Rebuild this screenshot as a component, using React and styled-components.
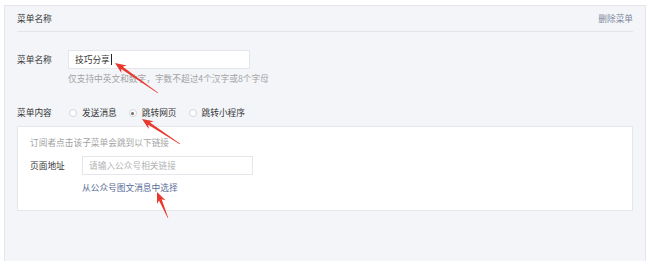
import React from "react";
import styled, { createGlobalStyle } from "styled-components";

const Global = createGlobalStyle`
  html, body { margin: 0; padding: 0; background: #ffffff; overflow: hidden; }
  body { font-family: "Noto Sans CJK SC", "Noto Sans", sans-serif; }
  * { box-sizing: border-box; }
`;

const Page = styled.div`
  position: relative;
  width: 650px;
  height: 261px;
  padding: 5px 4px 0 4px;
`;

const Panel = styled.div`
  height: 256px;
  background: #f4f5f9;
  border: 1px solid #e5e6eb;
  border-bottom: none;
  padding: 0 12px;
  font-size: 8.7px;
  line-height: 14px;
  color: #353535;
`;

const Header = styled.div`
  height: 26px;
  display: flex;
  align-items: center;
  justify-content: space-between;
  border-bottom: 1px solid #e2e4ea;
`;

const DeleteLink = styled.span`
  color: #7b869c;
`;

const Row = styled.div`
  display: flex;
  align-items: center;
  margin-top: ${(p) => p.$mt || 0}px;
`;

const Label = styled.div`
  width: ${(p) => p.$w}px;
  flex: none;
`;

const Input = styled.div`
  width: ${(p) => p.$w}px;
  height: 19px;
  background: #fff;
  border: 1px solid #e4e6eb;
  padding-left: 6px;
  display: flex;
  align-items: center;
  color: ${(p) => (p.$placeholder ? "#b3b3b3" : "#353535")};
`;

const Caret = styled.span`
  display: inline-block;
  width: 1px;
  height: 11px;
  background: #222;
  margin-left: 1px;
`;

const Hint = styled.div`
  margin-top: ${(p) => p.$mt || 0}px;
  margin-left: ${(p) => p.$ml || 0}px;
  color: #a3a3a3;
`;

const RadioGroup = styled.div`
  display: flex;
  align-items: center;
  gap: 12px;
`;

const RadioItem = styled.label`
  display: flex;
  align-items: center;
  gap: 5px;
`;

const RadioCircle = styled.span`
  width: 8px;
  height: 8px;
  border-radius: 50%;
  border: 1px solid #d2d4d9;
  background: #fff;
  display: flex;
  align-items: center;
  justify-content: center;
  &::after {
    content: "";
    width: 3px;
    height: 3px;
    border-radius: 50%;
    background: ${(p) => (p.$checked ? "#6b6b6b" : "transparent")};
  }
`;

const ContentBox = styled.div`
  margin-top: 6px;
  background: #fff;
  border: 1px solid #e6e7ec;
  padding: 9px 12px 15px 12px;
  height: 85px;
`;

const SelectLink = styled.div`
  margin-top: 6px;
  margin-left: 52px;
  color: #576b95;
`;

const Overlay = styled.svg`
  position: absolute;
  left: 0;
  top: 0;
  width: 650px;
  height: 261px;
  pointer-events: none;
`;

function arrowPoints(tip, tail) {
  const dx = tip[0] - tail[0];
  const dy = tip[1] - tail[1];
  const len = Math.hypot(dx, dy);
  const ux = dx / len, uy = dy / len;
  const nx = -uy, ny = ux;
  const headLen = 11, headW = 4.6, neck = 8.5, shaftW = 1.4, tailW = 0.35;
  const at = (d, w) => [tip[0] - ux * d + nx * w, tip[1] - uy * d + ny * w];
  const pts = [
    tip,
    at(headLen, headW),
    at(neck, shaftW),
    at(len, tailW),
    at(len, -tailW),
    at(neck, -shaftW),
    at(headLen, -headW),
  ];
  return pts.map((p) => p[0].toFixed(1) + "," + p[1].toFixed(1)).join(" ");
}

const arrows = [
  { tip: [115, 63], tail: [158, 93] },
  { tip: [142, 119], tail: [180, 144] },
  { tip: [157, 192], tail: [168, 218] },
];

export default function App() {
  return (
    <>
      <Global />
      <Page>
        <Panel>
          <Header>
            <span>菜单名称</span>
            <DeleteLink>删除菜单</DeleteLink>
          </Header>
          <Row $mt={18}>
            <Label $w={51}>菜单名称</Label>
            <Input $w={182}>
              技巧分享
              <Caret />
            </Input>
          </Row>
          <Hint $mt={3} $ml={51}>仅支持中英文和数字，字数不超过4个汉字或8个字母</Hint>
          <Row $mt={20}>
            <Label $w={52}>菜单内容</Label>
            <RadioGroup>
              <RadioItem>
                <RadioCircle />
                发送消息
              </RadioItem>
              <RadioItem>
                <RadioCircle $checked />
                跳转网页
              </RadioItem>
              <RadioItem>
                <RadioCircle />
                跳转小程序
              </RadioItem>
            </RadioGroup>
          </Row>
          <ContentBox>
            <Hint>订阅者点击该子菜单会跳到以下链接</Hint>
            <Row $mt={6}>
              <Label $w={52}>页面地址</Label>
              <Input $w={171} $placeholder>请输入公众号相关链接</Input>
            </Row>
            <SelectLink>从公众号图文消息中选择</SelectLink>
          </ContentBox>
        </Panel>
        <Overlay viewBox="0 0 650 261">
          {arrows.map((a, i) => (
            <polygon key={i} points={arrowPoints(a.tip, a.tail)} fill="#e8392e" />
          ))}
        </Overlay>
      </Page>
    </>
  );
}
